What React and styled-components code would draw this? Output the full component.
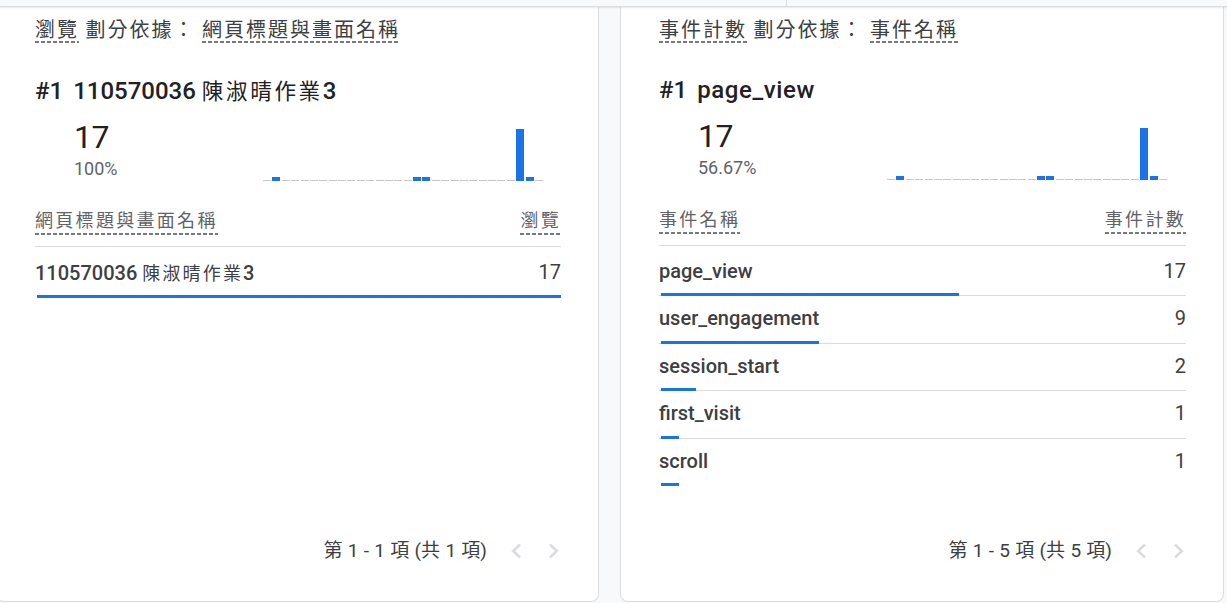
import React from "react";
import styled, { createGlobalStyle } from "styled-components";

const GlobalStyle = createGlobalStyle`
  html, body { margin: 0; padding: 0; background: #f8f9fa; }
  body { font-family: Roboto, "Noto Sans CJK TC", sans-serif; color: #3c4043; overflow: hidden; }
  * { box-sizing: border-box; }
`;

const Page = styled.div`
  width: 1227px;
  height: 603px;
  overflow: hidden;
  background: #f8f9fa;
`;

const TopBar = styled.div`
  height: 7px;
  display: flex;
  border-bottom: 1px solid #dadce0;
  box-shadow: 0 1px 2px rgba(60, 64, 67, 0.12);
  position: relative;
  z-index: 1;
`;

const TopSegment = styled.div`
  width: 787px;
  border-right: 1px solid #dadce0;
`;

const Cards = styled.div`
  display: grid;
  grid-template-columns: 603px 604px;
  column-gap: 21px;
  margin-left: -4px;
  height: 595px;
`;

const Card = styled.section`
  background: #fff;
  border: 1px solid #dadce0;
  border-top: none;
  border-radius: 0 0 8px 8px;
  padding: 10px 37px 0 38px;
  display: flex;
  flex-direction: column;
  min-width: 0;
`;

const Title = styled.div`
  font-family: "Noto Sans CJK TC", sans-serif;
  font-size: 20px;
  letter-spacing: 2px;
  line-height: 24px;
  color: #3c4043;
  white-space: pre;
`;

const Dotted = styled.span`
  display: inline-block;
  padding-bottom: ${(p) => p.$pad ?? 2}px;
  background-image: linear-gradient(to right, #757a80 0 4px, transparent 4px 6px);
  background-size: 6px 2px;
  background-repeat: repeat-x;
  background-position: left bottom;
`;

const Han = styled.span`
  font-family: "Noto Sans CJK TC", sans-serif;
  font-weight: 400;
  font-size: 0.9em;
  letter-spacing: 0.12em;
`;

const RankLine = styled.div`
  margin-top: 31px;
  font-size: 24px;
  line-height: 32px;
  font-weight: 500;
  color: #202124;
  white-space: nowrap;
`;

const Rank = styled.span`
  margin-right: 10px;
`;

const Latin = styled.span`
  letter-spacing: 0.6px;
`;

const StatsRow = styled.div`
  margin-top: 10px;
  display: flex;
  align-items: flex-end;
  padding-left: 39px;
`;

const NumberBlock = styled.div`
  width: 189px;
  flex: none;
`;

const BigNumber = styled.div`
  font-size: 32px;
  line-height: 40px;
  letter-spacing: -0.5px;
  color: #202124;
`;

const Percent = styled.div`
  font-size: 18px;
  line-height: 24px;
  color: #5f6368;
`;

const Chart = styled.div`
  width: 280px;
  height: 52px;
  display: grid;
  grid-template-columns: repeat(30, 1fr);
  column-gap: 1.333px;
  align-items: end;
`;

const ChartBar = styled.div`
  background: ${(p) => (p.$zero ? "#c4c7c9" : "#1a73e8")};
`;

const TableHead = styled.div`
  margin-top: 26px;
  display: flex;
  justify-content: space-between;
  align-items: flex-start;
  padding-bottom: 11px;
  border-bottom: 1px solid #dadce0;
  font-family: "Noto Sans CJK TC", sans-serif;
  font-size: 18px;
  letter-spacing: 2.3px;
  line-height: 24px;
  color: #5f6368;
`;

const TableBody = styled.div`
  padding-top: 3px;
`;

const Row = styled.div`
  padding-top: 10px;
  border-bottom: 1px solid #dadce0;
  &:last-child {
    border-bottom: none;
  }
`;

const RowLine = styled.div`
  display: flex;
  justify-content: space-between;
  font-size: 20px;
  line-height: 24px;
  color: #3c4043;
`;

const RowName = styled.span`
  font-weight: 500;
`;

const RowValue = styled.span`
  font-weight: 400;
`;

const BarTrack = styled.div`
  margin: 10.4px 0 -1px 2px;
  height: 3px;
`;

const BarFill = styled.div`
  height: 3px;
  background: #1a73e8;
`;

const Pager = styled.div`
  margin-top: auto;
  padding-bottom: 38px;
  display: flex;
  justify-content: flex-end;
  align-items: center;
  gap: 23px;
  padding-right: 1px;
`;

const PagerText = styled.div`
  font-size: 19px;
  line-height: 24px;
  word-spacing: 0.6px;
  color: #3c4043;
  white-space: pre;
`;

const PagerButtons = styled.div`
  display: flex;
  align-items: center;
  gap: 26px;
`;

const Chevron = ({ dir }) => (
  <svg width="12" height="16" viewBox="0 0 12 16" aria-hidden="true">
    <path
      d={dir === "left" ? "M10 1.5 L3.2 8 L10 14.5" : "M2 1.5 L8.8 8 L2 14.5"}
      fill="none"
      stroke="#dadce0"
      strokeWidth="2.6"
    />
  </svg>
);

const spark = Array.from({ length: 30 }, (_, i) =>
  i === 27 ? 13 : [1, 16, 17, 28].includes(i) ? 1 : 0
);

function Sparkline() {
  return (
    <Chart>
      {spark.map((v, i) => (
        <ChartBar key={i} $zero={v === 0} style={{ height: v === 0 ? 1 : v * 4 }} />
      ))}
    </Chart>
  );
}

function DataTable({ head, rows, total }) {
  return (
    <>
      <TableHead>
        <Dotted $pad={4}>{head[0]}</Dotted>
        <Dotted $pad={4}>{head[1]}</Dotted>
      </TableHead>
      <TableBody>
        {rows.map((r) => (
          <Row key={r.key}>
            <RowLine>
              <RowName>{r.name}</RowName>
              <RowValue>{r.value}</RowValue>
            </RowLine>
            <BarTrack>
              <BarFill style={{ width: `${(r.value / total) * 100}%` }} />
            </BarTrack>
          </Row>
        ))}
      </TableBody>
    </>
  );
}

function Pagination({ text }) {
  return (
    <Pager>
      <PagerText>{text}</PagerText>
      <PagerButtons>
        <Chevron dir="left" />
        <Chevron dir="right" />
      </PagerButtons>
    </Pager>
  );
}

const eventRows = [
  { key: "page_view", name: "page_view", value: 17 },
  { key: "user_engagement", name: "user_engagement", value: 9 },
  { key: "session_start", name: "session_start", value: 2 },
  { key: "first_visit", name: "first_visit", value: 1 },
  { key: "scroll", name: "scroll", value: 1 },
];

export default function App() {
  return (
    <Page>
      <GlobalStyle />
      <TopBar>
        <TopSegment />
      </TopBar>
      <Cards>
        <Card>
          <Title>
            <Dotted>瀏覽</Dotted> 劃分依據： <Dotted>網頁標題與畫面名稱</Dotted>
          </Title>
          <RankLine>
            <Rank>#1</Rank>110570036 <Han>陳淑晴作業</Han>3
          </RankLine>
          <StatsRow>
            <NumberBlock>
              <BigNumber>17</BigNumber>
              <Percent>100%</Percent>
            </NumberBlock>
            <Sparkline />
          </StatsRow>
          <DataTable
            head={["網頁標題與畫面名稱", "瀏覽"]}
            total={17}
            rows={[
              {
                key: "r1",
                name: (
                  <>
                    110570036 <Han>陳淑晴作業</Han>3
                  </>
                ),
                value: 17,
              },
            ]}
          />
          <Pagination text="第 1 - 1 項 (共 1 項)" />
        </Card>
        <Card>
          <Title>
            <Dotted>事件計數</Dotted> 劃分依據： <Dotted>事件名稱</Dotted>
          </Title>
          <RankLine>
            <Rank>#1</Rank>
            <Latin>page_view</Latin>
          </RankLine>
          <StatsRow>
            <NumberBlock>
              <BigNumber>17</BigNumber>
              <Percent>56.67%</Percent>
            </NumberBlock>
            <Sparkline />
          </StatsRow>
          <DataTable head={["事件名稱", "事件計數"]} total={30} rows={eventRows} />
          <Pagination text="第 1 - 5 項 (共 5 項)" />
        </Card>
      </Cards>
    </Page>
  );
}
